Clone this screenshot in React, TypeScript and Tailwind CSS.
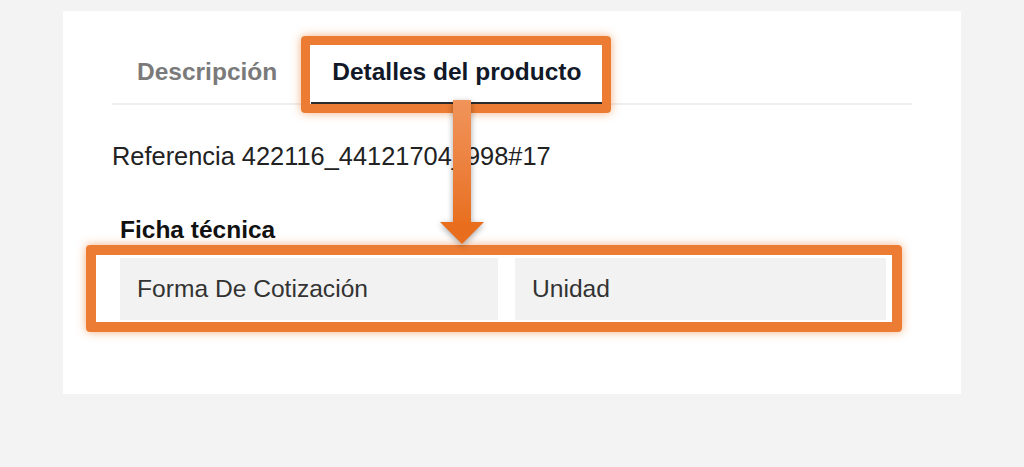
export default function App() {
  return (
    <div className="w-[1024px] h-[467px] bg-[#f3f3f3] pt-[11px] pl-[63px] font-['Liberation_Sans',Arial,sans-serif]">
      <div className="relative w-[898px] h-[383px] bg-white px-[49px] pt-[42px]">
        {/* tabs */}
        <div className="flex border-b-2 border-[#eeeeee] text-[24.5px] font-bold leading-[28px]">
          <div className="pl-[25px] pr-[24px] pt-[5px] pb-[17px] text-[#7a7a7a]">Descripción</div>
          <div className="ml-[10px] pl-[21px] pr-[22px] pt-[5px] pb-[15px] -mb-[2px] border-b-[3px] border-[#2b2b2b] text-[#111827]">
            Detalles del producto
          </div>
        </div>

        <p className="mt-[37px] text-[25.4px] leading-[28px] text-[#222]">Referencia 422116_44121704_998#17</p>

        <h3 className="mt-[46px] ml-[8px] text-[24.5px] leading-[28px] font-bold text-[#111]">Ficha técnica</h3>

        <div className="mt-[14px] ml-[8px] flex gap-[17px] text-[24.6px] text-[#333]">
          <div className="w-[378px] h-[62px] bg-[#f2f2f2] px-[17px] flex items-center">Forma De Cotización</div>
          <div className="w-[371px] h-[62px] bg-[#f2f2f2] px-[17px] flex items-center">Unidad</div>
        </div>

        {/* annotation overlays */}
        <div className="absolute left-[238px] top-[25px] w-[310px] h-[77px] border-[9px] border-[#ec7c33] rounded-[4px] shadow-[0_0_10px_rgba(237,125,49,0.6)]" />
        <div className="absolute left-[23px] top-[234px] w-[816px] h-[87px] border-[10px] border-[#ec7c33] rounded-[4px] shadow-[0_0_10px_rgba(237,125,49,0.6)]" />

        <div className="absolute left-[377px] top-[89px] w-[44px] flex flex-col items-center drop-shadow-[0_2px_3px_rgba(0,0,0,0.35)]">
          <div className="w-[18px] h-[122px] bg-gradient-to-b from-[#f0945a] to-[#e8701f]" />
          <svg width="44" height="22" viewBox="0 0 44 22" className="block">
            <polygon points="0,0 44,0 22,22" fill="#e86d1c" />
          </svg>
        </div>
      </div>
    </div>
  );
}
